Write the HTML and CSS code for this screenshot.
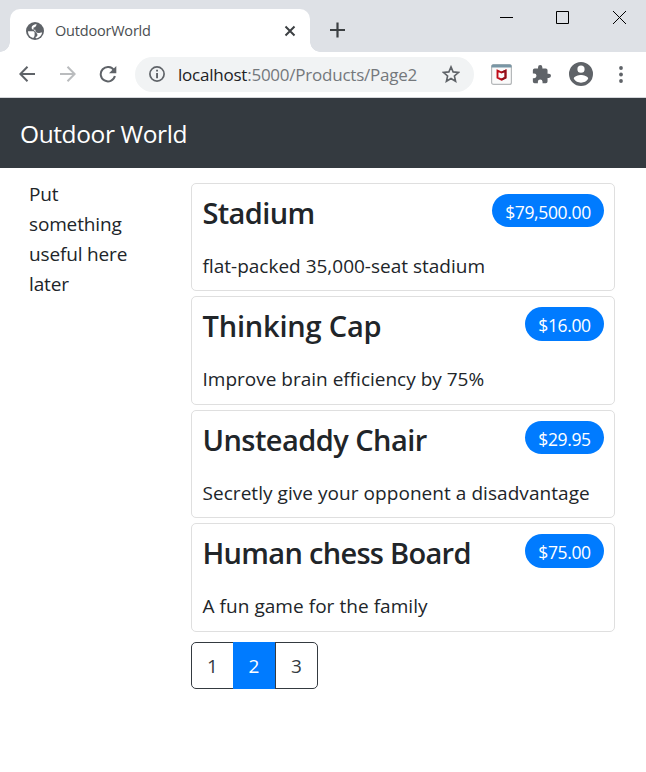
FILE: index.html
```html
<!DOCTYPE html>
<html lang="en">
<head>
<meta charset="utf-8">
<title>OutdoorWorld</title>
<link rel="stylesheet" href="styles.css">
</head>
<body>
<div class="tabstrip">
  <div class="tab">
    <svg class="globe" width="18" height="18" viewBox="0 0 18 18"><circle cx="9" cy="9" r="9" fill="#5f6368"/><path d="M10.500 2C8 2.300 5.600 3.500 5.600 5.700 5.600 7.500 7 7.700 9.300 7.700c0 2.300 1.200 3.300 3.300 3.200 1.300 0 2-.5 3.500-.5C15.600 13.800 13 16 10 16.200l-.6-1.200c1.500-.2 2-1 2-2.300-.1-1.400-1-2-2.300-2h-.5V13c0 1-.3 2-1.400 2.900C4 15.200 2 12.500 2 9.200h4.200c1.500 0 2.400.4 2.400 1.500h1.600L7.400 7.600l.2-2.100c1.600 0 2.900-1.500 2.900-3.500Z" fill="#fff"/></svg>
    <span class="tab-title">OutdoorWorld</span>
    <svg class="tab-close" width="12" height="12" viewBox="0 0 12 12" stroke="#3c4043" stroke-width="2"><path d="M1.500 1.500l9 9m0-9l-9 9"/></svg>
  </div>
  <svg class="new-tab" width="16" height="16" viewBox="0 0 16 16" stroke="#3c4043" stroke-width="2.200"><path d="M0 8h15M7.500 .5v15"/></svg>
  <div class="window-buttons">
    <svg width="13" height="13" viewBox="0 0 13 13"><path d="M0 6.500h13" stroke="#000"/></svg>
    <svg width="13" height="13" viewBox="0 0 13 13"><path d="M.5.5h12v12H.5z" fill="none" stroke="#000"/></svg>
    <svg width="13" height="13" viewBox="0 0 13 13"><path d="M0 0l13 13M13 0L0 13" stroke="#000"/></svg>
  </div>
</div>
<div class="toolbar">
  <svg class="back" width="16" height="16" viewBox="0 0 16 16" fill="none" stroke="#5f6368" stroke-width="2"><path d="M16 8H1.500M8.500.8L1.300 8l7.200 7.200"/></svg>
  <svg class="forward" width="16" height="16" viewBox="0 0 16 16" fill="none" stroke="#babcbe" stroke-width="2"><path d="M0 8h14.500M7.500.8L14.700 8l-7.200 7.200"/></svg>
  <svg class="reload" width="18" height="18" viewBox="0 0 18 18"><path d="M15 5.300A7.200 7.200 0 1 0 15.900 11" fill="none" stroke="#5f6368" stroke-width="2"/><path d="M17.300.9v7.300H10z" fill="#5f6368"/></svg>
  <div class="address">
    <svg class="info" width="16" height="16" viewBox="0 0 16 16"><circle cx="8" cy="8" r="7.100" fill="none" stroke="#5f6368" stroke-width="1.700"/><path d="M7.100 3.700h1.900v1.900H7.100zm0 3.300h1.900v5.300H7.100z" fill="#5f6368"/></svg>
    <span class="url">localhost<span class="path">:5000/Products/Page2</span></span>
    <svg class="star" width="18" height="18" viewBox="0 0 18 18"><path d="M9 1.900l2.100 5 5.400.5-4.100 3.600 1.200 5.300L9 13.500l-4.600 2.800L5.600 11 1.500 7.400l5.400-.5z" fill="none" stroke="#5f6368" stroke-width="1.600"/></svg>
  </div>
  <svg class="shield" width="21" height="21" viewBox="0 0 21 21"><rect x=".6" y=".6" width="19.800" height="19.800" rx="2" fill="#fafafa" stroke="#b5b8ba" stroke-width="1.200"/><path d="M.5 3.500V2Q.5.500 2 .5h17q1.500 0 1.500 1.500v1.500z" fill="#7896a5"/><path d="M6.500 6.700l4 1.800 4-1.800v6.900l-4 2.100-4-2.100z" fill="none" stroke="#c00c19" stroke-width="1.900"/><path d="M10.500 8.500l4-1.800v6.900l-4 2.100" fill="none" stroke="#8e101a" stroke-width="1.900"/></svg>
  <svg class="puzzle" width="19" height="19" viewBox="1 1 22 22"><path d="M20.500 11H19V7a2 2 0 0 0-2-2h-4V3.500a2.500 2.500 0 0 0-5 0V5H4a2 2 0 0 0-2 2v3.800h1.500a2.700 2.700 0 0 1 0 5.400H2V20a2 2 0 0 0 2 2h3.800v-1.500a2.700 2.700 0 0 1 5.400 0V22H17a2 2 0 0 0 2-2v-4h1.500a2.500 2.500 0 0 0 0-5Z" fill="#5f6368"/></svg>
  <svg class="avatar" width="24" height="24" viewBox="2 2 20 20"><path d="M12 2a10 10 0 1 0 0 20 10 10 0 0 0 0-20Zm0 3a3 3 0 1 1 0 6 3 3 0 0 1 0-6Zm0 14.200a7.200 7.200 0 0 1-6-3.220c.03-1.990 4-3.080 6-3.080s5.970 1.090 6 3.080a7.200 7.200 0 0 1-6 3.220Z" fill="#5f6368"/></svg>
  <svg class="menu" width="4" height="17" viewBox="0 0 4 17" fill="#5f6368"><circle cx="2" cy="2" r="1.900"/><circle cx="2" cy="8.500" r="1.900"/><circle cx="2" cy="15" r="1.900"/></svg>
</div>
<header class="navbar"><span class="brand">Outdoor World</span></header>
<div class="layout">
  <aside class="sidebar">Put<br>something<br>useful here<br>later</aside>
  <main class="products">
    <section class="card">
      <div class="heading"><h4 class="t1">Stadium</h4><span class="badge wide">$79,500.00</span></div>
      <p>flat-packed 35,000-seat stadium</p>
    </section>
    <section class="card">
      <div class="heading"><h4 class="t2">Thinking Cap</h4><span class="badge">$16.00</span></div>
      <p>Improve brain efficiency by 75%</p>
    </section>
    <section class="card">
      <div class="heading"><h4 class="t3">Unsteaddy Chair</h4><span class="badge">$29.95</span></div>
      <p class="d3">Secretly give your opponent a disadvantage</p>
    </section>
    <section class="card">
      <div class="heading"><h4 class="t4">Human chess Board</h4><span class="badge">$75.00</span></div>
      <p class="d3">A fun game for the family</p>
    </section>
    <nav class="pages"><a>1</a><a class="active">2</a><a>3</a></nav>
  </main>
</div>
</body>
</html>
```

FILE: styles.css
```css
* { box-sizing: border-box; }
body { margin: 0; height: 772px; overflow: hidden; background: #fff; color: #212529; font: 19px/30px "Open Sans", "Noto Sans", sans-serif; }
svg { display: block; flex: none; }
span, h4, p, a { white-space: nowrap; }

.tabstrip { display: flex; height: 52px; background: #dee1e6; }
.tab { position: relative; display: flex; align-items: center; width: 300px; height: 43px; margin: 9px 0 0 10px; padding: 0 14px 0 16px; background: #fff; border-radius: 10px 10px 0 0; }
.tab::before, .tab::after { content: ""; position: absolute; bottom: 0; width: 10px; height: 10px; }
.tab::before { left: -10px; background: radial-gradient(circle at 0 0, transparent 9.5px, #fff 10px); }
.tab::after { right: -10px; background: radial-gradient(circle at 100% 0, transparent 9.5px, #fff 10px); }
.tab-title { margin-left: 11px; color: #4a4e51; font-size: 14.500px; letter-spacing: -.2px; }
.tab-close { margin-left: auto; }
.new-tab { margin: 22px 0 0 20px; }
.window-buttons { display: flex; gap: 43px; margin: 11px 20px 0 auto; }
.window-buttons svg:first-child { margin-right: 1px; margin-left: -1px; }
.window-buttons svg:nth-child(2) { margin-right: 1px; margin-left: -1px; }

.toolbar { display: flex; align-items: center; height: 46px; padding: 0 23px 1px 19px; border-bottom: 1px solid #d4d6da; }
.forward { margin-left: 25px; }
.reload { margin-left: 23px; }
.address { display: flex; align-items: center; width: 339px; height: 35px; margin-left: 18px; padding: 0 14px; border-radius: 18px; background: #f1f3f4; }
.url { margin-left: 13px; padding-top: 1px; color: #202124; font-size: 17px; letter-spacing: -.23px; }
.path { color: #74787c; }
.star { margin-left: auto; }
.shield { margin-left: 17px; }
.puzzle { margin-left: 20px; }
.avatar { margin-left: 18px; }
.menu { margin-left: auto; }

.navbar { display: flex; align-items: center; height: 70px; padding: 2px 20px 0; background: #343a40; }
.brand { color: #fff; font-size: 24.500px; letter-spacing: -.4px; }

.layout { display: flex; padding: 0 31px 0 29px; }
.sidebar { width: 162px; padding-top: 11px; letter-spacing: -.15px; }
.products { flex: 1; padding-top: 15px; }
.card { height: 108.400px; margin-bottom: 5px; padding: 10px 10px 0 10.500px; border: 1px solid #dfdfdf; border-radius: 5px; }
.heading { display: flex; justify-content: space-between; }
h4 { margin: 1px 0 0; font-size: 29px; line-height: 36px; font-weight: 600; }
.t1 { letter-spacing: -.65px; }
.t2 { letter-spacing: -.2px; }
.t3 { letter-spacing: -.55px; }
.t4 { letter-spacing: -.7px; }
.card p { margin: 20px 0 0; line-height: 30px; }
.d3 { letter-spacing: .05px; }
.badge { width: 79px; height: 33.400px; border-radius: 17px; background: #007bff; color: #fff; font-size: 17.500px; letter-spacing: -.35px; line-height: 36px; text-align: center; }
.wide { width: 112px; }
.pages { display: flex; width: 127px; height: 47px; margin-top: 10px; border: 1px solid #343a40; border-radius: 5px; line-height: 46px; text-align: center; color: #343a40; }
.pages a { flex: 1; }
.pages .active { flex: none; width: 43px; height: 47px; margin-top: -1px; line-height: 48px; background: #007bff; color: #fff; border-right: 1px solid #343a40; }
```
